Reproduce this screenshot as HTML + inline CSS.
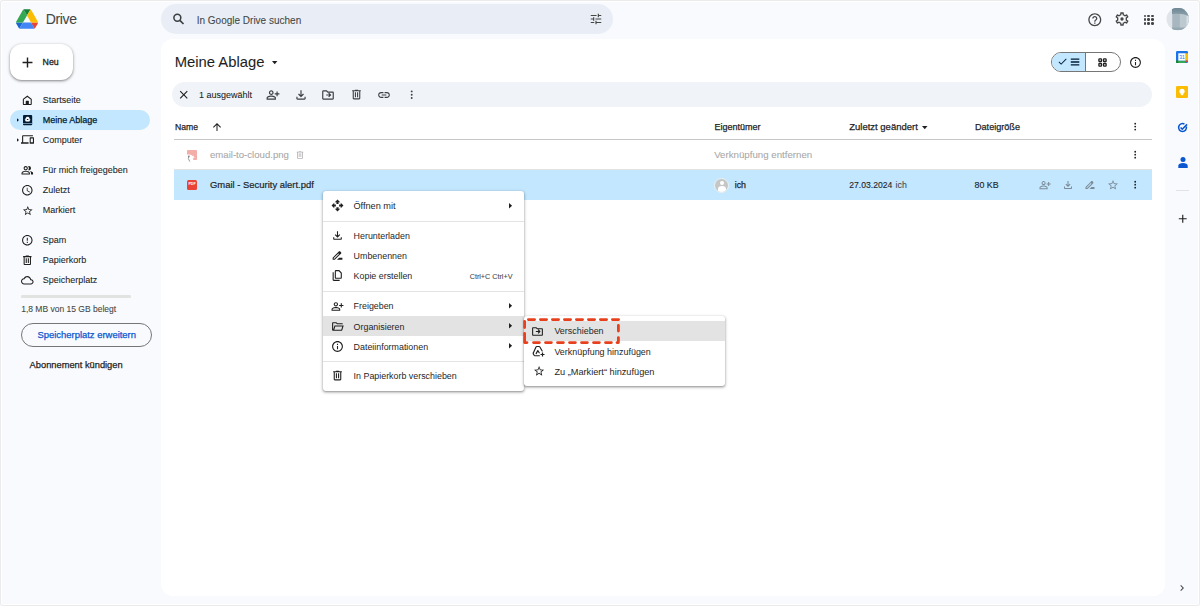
<!DOCTYPE html>
<html><head><meta charset="utf-8">
<style>
*{box-sizing:border-box;margin:0;padding:0}
html,body{width:1200px;height:606px;overflow:hidden}
body{background:#f8fafd;font-family:"Liberation Sans",sans-serif;color:#1f1f1f;position:relative}
.a{position:absolute}
.t{position:absolute;white-space:nowrap;line-height:1}
svg{position:absolute;overflow:visible}
</style></head><body>
<div class="a" style="left:0;top:0;width:1200px;height:606px;border:1px solid #ebebeb;border-radius:3px"></div>
<div class="a" style="left:1px;top:1px;width:1198px;height:604px;border:1px solid #fff;border-radius:2px"></div>
<svg style="left:16px;top:9px" width="22" height="20" viewBox="0 0 87.3 78">
<path d="m6.6 66.85 3.85 6.65c.8 1.4 1.95 2.5 3.3 3.3l13.75-23.8h-27.5c0 1.55.4 3.1 1.2 4.5z" fill="#1967d2"/>
<path d="m43.65 25-13.75-23.8c-1.35.8-2.5 1.9-3.3 3.3l-25.4 44a9.06 9.06 0 0 0 -1.2 4.5h27.5z" fill="#34a853"/>
<path d="m73.55 76.8c1.35-.8 2.5-1.9 3.3-3.3l1.6-2.75 7.65-13.25c.8-1.4 1.2-2.95 1.2-4.5h-27.502l5.852 11.5z" fill="#ea4335"/>
<path d="m43.65 25 13.75-23.8c-1.35-.8-2.9-1.2-4.5-1.2h-18.5c-1.6 0-3.15.45-4.5 1.2z" fill="#188038"/>
<path d="m59.8 53h-32.3l-13.75 23.8c1.35.8 2.9 1.2 4.5 1.2h50.8c1.6 0 3.15-.45 4.5-1.2z" fill="#4285f4"/>
<path d="m73.4 26.5-12.7-22c-.8-1.4-1.95-2.5-3.3-3.3l-13.75 23.8 16.15 28h27.45c0-1.55-.4-3.1-1.2-4.5z" fill="#fbbc04"/>
</svg>
<div class="t" style="left:45.7px;top:12.45px;font-size:14px;color:#444746;font-weight:normal;-webkit-text-stroke:0.08px #444746;letter-spacing:-0.32px">Drive</div>
<div class="a" style="left:161px;top:4px;width:452px;height:30px;border-radius:15px;background:#e9eef6"></div>
<svg style="left:0;top:0" width="1200" height="606" viewBox="0 0 1200 606"><circle cx="177.35" cy="17.8" r="3.45" fill="none" stroke="#3c3f41" stroke-width="1.55"/><path d="M179.9 20.4L183.5 24" stroke="#3c3f41" stroke-width="1.65"/></svg>
<div class="t" style="left:196.7px;top:15.54px;font-size:10px;color:#444746;font-weight:normal;-webkit-text-stroke:0.08px #444746;">In Google Drive suchen</div>
<svg style="left:588.5px;top:12px;" width="14" height="14" viewBox="0 0 24 24"><path fill="#444746" d="M3 17v2h6v-2H3zM3 5v2h10V5H3zm10 16v-2h8v-2h-8v-2h-2v6h2zM7 9v2H3v2h4v2h2V9H7zm14 4v-2H11v2h10zm-6-4h2V7h4V5h-4V3h-2v6z"/></svg>
<svg style="left:1086.8px;top:11.5px;" width="15.6" height="15.6" viewBox="0 0 24 24"><path fill="#444746" d="M11 18h2v-2h-2v2zm1-16C6.48 2 2 6.48 2 12s4.48 10 10 10 10-4.48 10-10S17.52 2 12 2zm0 18c-4.41 0-8-3.59-8-8s3.590-8 8-8 8 3.59 8 8-3.59 8-8 8zm0-14c-2.21 0-4 1.79-4 4h2c0-1.1.9-2 2-2s2 .9 2 2c0 2-3 1.75-3 5h2c0-2.25 3-2.5 3-5 0-2.21-1.79-4-4-4z"/></svg>
<svg style="left:1114px;top:11.2px;" width="16" height="16" viewBox="0 0 24 24"><path fill="#444746" d="M19.43 12.98c.04-.32.07-.64.07-.98 0-.34-.03-.66-.07-.98l2.11-1.65c.19-.15.24-.42.12-.64l-2-3.46c-.09-.16-.26-.25-.44-.25-.06 0-.12.01-.17.03l-2.49 1c-.52-.4-1.08-.73-1.69-.98l-.38-2.65C14.46 2.18 14.25 2 14 2h-4c-.25 0-.46.18-.49.42l-.38 2.65c-.61.25-1.17.59-1.69.98l-2.49-1c-.06-.02-.12-.03-.18-.03-.17 0-.34.09-.43.25l-2 3.46c-.13.22-.07.49.12.64l2.11 1.65c-.04.32-.07.65-.07.98 0 .33.03.66.07.98l-2.11 1.65c-.19.15-.24.42-.12.64l2 3.46c.09.16.26.25.44.25.06 0 .12-.01.17-.03l2.49-1c.52.4 1.08.73 1.690.98l.38 2.65c.03.24.24.42.49.42h4c.25 0 .46-.18.49-.42l.38-2.65c.61-.25 1.17-.59 1.69-.98l2.49 1c.06.02.12.03.18.03.17 0 .34-.09.43-.25l2-3.46c.12-.22.07-.49-.12-.64l-2.11-1.65zm-1.98-1.71c.04.31.05.52.05.73 0 .21-.02.43-.05.73l-.14 1.13.89.7 1.08.84-.7 1.21-1.27-.51-1.04-.42-.9.68c-.43.32-.84.56-1.25.73l-1.06.43-.16 1.13-.2 1.35h-1.4l-.19-1.35-.16-1.13-1.06-.43c-.43-.18-.83-.41-1.23-.71l-.91-.7-1.06.43-1.27.51-.7-1.21 1.08-.84.89-.7-.14-1.13c-.03-.31-.05-.54-.05-.74s.02-.43.05-.73l.14-1.13-.89-.7-1.08-.84.7-1.21 1.27.51 1.04.42.9-.68c.43-.32.84-.56 1.25-.73l1.06-.43.16-1.13.2-1.35h1.39l.19 1.35.16 1.13 1.06.43c.43.18.83.41 1.23.71l.91.7 1.06-.43 1.27-.51.7 1.21-1.07.85-.89.7.14 1.13zM12 9.5a2.5 2.5 0 1 0 0 5 2.5 2.5 0 1 0 0-5z"/></svg>
<div class="a" style="left:1143.6px;top:14.6px;width:2.4px;height:2.4px;border-radius:50%;background:#444746"></div>
<div class="a" style="left:1147.4px;top:14.6px;width:2.4px;height:2.4px;border-radius:50%;background:#444746"></div>
<div class="a" style="left:1151.2px;top:14.6px;width:2.4px;height:2.4px;border-radius:50%;background:#444746"></div>
<div class="a" style="left:1143.6px;top:18.4px;width:2.4px;height:2.4px;border-radius:50%;background:#444746"></div>
<div class="a" style="left:1147.4px;top:18.4px;width:2.4px;height:2.4px;border-radius:50%;background:#444746"></div>
<div class="a" style="left:1151.2px;top:18.4px;width:2.4px;height:2.4px;border-radius:50%;background:#444746"></div>
<div class="a" style="left:1143.6px;top:22.2px;width:2.4px;height:2.4px;border-radius:50%;background:#444746"></div>
<div class="a" style="left:1147.4px;top:22.2px;width:2.4px;height:2.4px;border-radius:50%;background:#444746"></div>
<div class="a" style="left:1151.2px;top:22.2px;width:2.4px;height:2.4px;border-radius:50%;background:#444746"></div>
<svg style="left:1166px;top:8px" width="23" height="22" viewBox="0 0 23 22"><defs><clipPath id="av"><circle cx="11.7" cy="11.05" r="11.2"/></clipPath><linearGradient id="avg" x1="0" y1="0" x2="0" y2="1"><stop offset="0" stop-color="#6f8794"/><stop offset="1" stop-color="#8ea2ad"/></linearGradient></defs><g clip-path="url(#av)"><rect x="0" y="0" width="23" height="22" fill="#dfe5e8"/><rect x="6.2" y="0" width="17" height="22" fill="#a8b7bf"/><rect x="13.8" y="0" width="9" height="22" fill="#bccad0"/><path d="M6 0H23V8Q16 5 6 6z" fill="url(#avg)"/><rect x="20.5" y="8" width="3" height="14" fill="#d9e0e4"/><rect x="6.2" y="19.5" width="14" height="3" fill="#95a8b2"/></g></svg>
<div class="a" style="left:161px;top:39px;width:1004px;height:557px;border-radius:12px;background:#fff"></div>
<div class="a" style="left:10px;top:44px;width:63px;height:36px;border-radius:12px;background:#fff;box-shadow:0 1px 2px rgba(0,0,0,.3),0 1px 3px 1px rgba(0,0,0,.15)"></div>
<svg style="left:18.8px;top:53.8px;" width="17" height="17" viewBox="0 0 24 24"><path fill="#1f1f1f" d="M19 13h-6v6h-2v-6H5v-2h6V5h2v6h6v2z"/></svg>
<div class="t" style="left:42.6px;top:58.35px;font-size:8.8px;color:#1f1f1f;font-weight:normal;-webkit-text-stroke:0.31px #1f1f1f">Neu</div>
<div class="a" style="left:10px;top:110px;width:140px;height:20px;border-radius:10px;background:#c2e7ff"></div>
<svg style="left:21.3px;top:93.9px;" width="12.6" height="12.6" viewBox="0 0 24 24"><path fill="#1f1f1f" d="M12 3 3.5 9.5V19c0 1.1.9 2 2 2h13c1.1 0 2-.9 2-2V9.5L12 3zm6.5 16H15v-5c0-.55-.45-1-1-1h-4c-.55 0-1 .45-1 1v5H5.5v-8.5L12 5.5l6.5 5V19z"/></svg>
<div class="t" style="left:42.7px;top:95.98px;font-size:9px;color:#1f1f1f;font-weight:normal;-webkit-text-stroke:0.08px #1f1f1f;">Startseite</div>
<svg style="left:22.9px;top:114.5px" width="9.2" height="10.3" viewBox="0 0 9.2 10.3"><rect x="0" y="0" width="9.2" height="10.3" rx="1" fill="#001d35"/><rect x="0" y="8" width="9.2" height="0.9" fill="#7d9bb3"/><path d="M3.6 2.1H5.6L7 4.7 6.4 6.2H2.8L2.2 4.7z" fill="#fff" stroke="#fff" stroke-width=".5" stroke-linejoin="round"/><path d="M4.1 4.1H5.1L5.6 5.1H3.6z" fill="#001d35"/></svg>
<svg style="left:15.5px;top:117.6px" width="4" height="4" viewBox="0 0 24 24"><path fill="#001d35" d="M6 2l12 10-12 10z"/></svg>
<div class="t" style="left:42.7px;top:115.88px;font-size:9px;color:#001d35;font-weight:normal;-webkit-text-stroke:0.25px #001d35">Meine Ablage</div>
<svg style="left:15.5px;top:137.5px" width="4" height="4" viewBox="0 0 24 24"><path fill="#1f1f1f" d="M6 2l12 10-12 10z"/></svg>
<svg style="left:21.2px;top:132.5px;" width="13" height="13" viewBox="0 0 24 24"><path fill="#1f1f1f" d="M4 6h18V4H4c-1.1 0-2 .9-2 2v11H0v3h14v-3H4V6zm19 2h-6c-.55 0-1 .45-1 1v10c0 .55.45 1 1 1h6c.55 0 1-.45 1-1V9c0-.55-.45-1-1-1zm-1 9h-4v-7h4v7z"/></svg>
<div class="t" style="left:42.7px;top:135.78px;font-size:9px;color:#1f1f1f;font-weight:normal;-webkit-text-stroke:0.08px #1f1f1f;">Computer</div>
<svg style="left:21.3px;top:163.9px;" width="12.6" height="12.6" viewBox="0 0 24 24"><path fill="#1f1f1f" d="M16.67 13.13C18.04 14.06 19 15.32 19 17v3h4v-3c0-2.18-3.57-3.47-6.33-3.87zM15 12c2.21 0 4-1.79 4-4s-1.79-4-4-4c-.47 0-.91.1-1.33.24C14.5 5.27 15 6.58 15 8s-.5 2.73-1.33 3.76c.42.14.86.24 1.33.24zm-6 0c2.21 0 4-1.79 4-4s-1.79-4-4-4-4 1.79-4 4 1.79 4 4 4zm0-6c1.1 0 2 .9 2 2s-.9 2-2 2-2-.9-2-2 .9-2 2-2zm0 7c-2.67 0-8 1.34-8 4v3h16v-3c0-2.66-5.33-4-8-4zm6 5H3v-.99C3.2 16.29 6.3 15 9 15s5.8 1.29 6 2v1z"/></svg>
<div class="t" style="left:42.7px;top:165.98px;font-size:9px;color:#1f1f1f;font-weight:normal;-webkit-text-stroke:0.08px #1f1f1f;">Für mich freigegeben</div>
<svg style="left:21.3px;top:183.9px;" width="12.6" height="12.6" viewBox="0 0 24 24"><path fill="#1f1f1f" d="M11.99 2C6.47 2 2 6.48 2 12s4.47 10 9.99 10C17.52 22 22 17.52 22 12S17.52 2 11.99 2zM12 20c-4.42 0-8-3.58-8-8s3.58-8 8-8 8 3.58 8 8-3.58 8-8 8zm.5-13H11v6l5.25 3.15.75-1.23-4.5-2.67z"/></svg>
<div class="t" style="left:42.7px;top:185.98px;font-size:9px;color:#1f1f1f;font-weight:normal;-webkit-text-stroke:0.08px #1f1f1f;">Zuletzt</div>
<svg style="left:21.9px;top:204.70000000000002px;" width="11.6" height="11.6" viewBox="0 0 24 24"><path fill="#1f1f1f" d="M22 9.24l-7.19-.62L12 2 9.19 8.63 2 9.24l5.46 4.73L5.82 21 12 17.27 18.18 21l-1.63-7.03L22 9.24zM12 15.4l-3.76 2.27 1-4.28-3.32-2.88 4.38-.38L12 6.1l1.71 4.04 4.38.38-3.32 2.88 1 4.28L12 15.4z"/></svg>
<div class="t" style="left:42.7px;top:206.08px;font-size:9px;color:#1f1f1f;font-weight:normal;-webkit-text-stroke:0.08px #1f1f1f;">Markiert</div>
<svg style="left:21.3px;top:234.2px;" width="12.6" height="12.6" viewBox="0 0 24 24"><path fill="#1f1f1f" d="M11 15h2v2h-2zm0-8h2v6h-2zm.99-5C6.47 2 2 6.48 2 12s4.47 10 9.99 10C17.52 22 22 17.52 22 12S17.52 2 11.99 2zM12 20c-4.42 0-8-3.58-8-8s3.58-8 8-8 8 3.58 8 8-3.58 8-8 8z"/></svg>
<div class="t" style="left:42.7px;top:236.28px;font-size:9px;color:#1f1f1f;font-weight:normal;-webkit-text-stroke:0.08px #1f1f1f;">Spam</div>
<svg style="left:21.3px;top:254.2px;" width="12.6" height="12.6" viewBox="0 0 24 24"><path fill="#1f1f1f" d="M7 21c-.55 0-1.02-.2-1.41-.59C5.2 20.02 5 19.55 5 19V6H4V4h5V3h6v1h5v2h-1v13c0 .55-.2 1.02-.59 1.41-.39.39-.86.59-1.41.59H7zM17 6H7v13h10V6zM9 17h2V8H9v9zm4 0h2V8h-2v9z"/></svg>
<div class="t" style="left:42.7px;top:256.28px;font-size:9px;color:#1f1f1f;font-weight:normal;-webkit-text-stroke:0.08px #1f1f1f;">Papierkorb</div>
<svg style="left:21.3px;top:274.2px;" width="12.6" height="12.6" viewBox="0 0 24 24"><path fill="#1f1f1f" d="M19.35 10.04C18.67 6.59 15.64 4 12 4 9.11 4 6.6 5.64 5.35 8.04 2.34 8.36 0 10.91 0 14c0 3.31 2.69 6 6 6h13c2.76 0 5-2.24 5-5 0-2.64-2.05-4.78-4.65-4.96zM19 18H6c-2.21 0-4-1.79-4-4 0-2.05 1.53-3.76 3.56-3.97l1.07-.11.5-.95C8.08 7.14 9.94 6 12 6c2.62 0 4.88 1.86 5.39 4.43l.3 1.5 1.53.11c1.56.1 2.78 1.41 2.78 2.96 0 1.65-1.35 3-3 3z"/></svg>
<div class="t" style="left:42.7px;top:276.28px;font-size:9px;color:#1f1f1f;font-weight:normal;-webkit-text-stroke:0.08px #1f1f1f;">Speicherplatz</div>
<div class="a" style="left:21px;top:295.3px;width:110px;height:2.5px;border-radius:1.25px;background:#e1e3e1"></div>
<div class="t" style="left:21.2px;top:305.40px;font-size:8.5px;color:#444746;font-weight:normal;-webkit-text-stroke:0.08px #444746;">1,8 MB von 15 GB belegt</div>
<div class="a" style="left:21px;top:323px;width:131px;height:24px;border-radius:12px;border:1px solid #747775"></div>
<div class="t" style="left:37.4px;top:330.00px;font-size:9.45px;color:#0b57d0;font-weight:normal;-webkit-text-stroke:0.25px #0b57d0">Speicherplatz erweitern</div>
<div class="t" style="left:29.6px;top:360.73px;font-size:9.3px;color:#1f1f1f;font-weight:normal;-webkit-text-stroke:0.25px #1f1f1f">Abonnement kündigen</div>
<div class="t" style="left:174.75px;top:55.37px;font-size:14.8px;color:#1f1f1f;font-weight:normal;-webkit-text-stroke:0.08px #1f1f1f;">Meine Ablage</div>
<svg style="left:272.3px;top:60.7px" width="5.4" height="3.3" viewBox="0 0 5.4 3.3"><path fill="#1f1f1f" d="M0 0H5.4L2.7 3.3z"/></svg>
<div class="a" style="left:1051px;top:52px;width:70px;height:20px;border-radius:10px;border:1px solid #747775;overflow:hidden"><div class="a" style="left:0;top:0;width:34px;height:18px;background:#c2e7ff;border-right:1px solid #747775"></div></div>
<svg style="left:1057px;top:55.5px;" width="11" height="11" viewBox="0 0 24 24"><path fill="#001d35" d="M9 16.17L4.83 12l-1.42 1.41L9 19 21 7l-1.41-1.41z"/></svg>
<svg style="left:0;top:0" width="1200" height="606" viewBox="0 0 1200 606"><path d="M1070.8 59.1H1079.3M1070.8 62H1079.3M1070.8 64.9H1079.3" stroke="#001d35" stroke-width="1.4"/></svg>
<svg style="left:1098px;top:58px" width="9" height="9" viewBox="0 0 9 9"><g fill="none" stroke="#1f1f1f" stroke-width="1.3"><rect x="0.9" y="0.9" width="2.6" height="2.6" rx=".6"/><rect x="5.5" y="0.9" width="2.6" height="2.6" rx=".6"/><rect x="0.9" y="5.5" width="2.6" height="2.6" rx=".6"/><rect x="5.5" y="5.5" width="2.6" height="2.6" rx=".6"/></g></svg>
<svg style="left:1129.2px;top:55.5px;" width="13" height="13" viewBox="0 0 24 24"><path fill="#1f1f1f" d="M11 7h2v2h-2zm0 4h2v6h-2zm1-9C6.48 2 2 6.48 2 12s4.48 10 10 10 10-4.48 10-10S17.52 2 12 2zm0 18c-4.41 0-8-3.59-8-8s3.59-8 8-8 8 3.59 8 8-3.59 8-8 8z"/></svg>
<div class="a" style="left:171.5px;top:82px;width:980.3px;height:25px;border-radius:12.5px;background:#f0f4f9"></div>
<svg style="left:177.2px;top:88.2px;" width="13.5" height="13.5" viewBox="0 0 24 24"><path fill="#1f1f1f" d="M19 6.41L17.59 5 12 10.59 6.41 5 5 6.41 10.59 12 5 17.59 6.41 19 12 13.41 17.59 19 19 17.59 13.41 12z"/></svg>
<div class="t" style="left:199px;top:90.88px;font-size:9px;color:#1f1f1f;font-weight:normal;-webkit-text-stroke:0.08px #1f1f1f;">1 ausgewählt</div>
<svg style="left:266.3px;top:87.7px;" width="14" height="14" viewBox="0 0 24 24"><path fill="#3c3f41" d="M18 14v-3h-3V9h3V6h2v3h3v2h-3v3h-2zM9 12c-1.1 0-2.04-.39-2.83-1.17C5.39 10.04 5 9.1 5 8s.39-2.04 1.17-2.83C6.96 4.39 7.9 4 9 4s2.04.39 2.83 1.17C12.61 5.96 13 6.9 13 8s-.39 2.04-1.17 2.83C11.04 11.61 10.1 12 9 12zM1 20v-2.8c0-.57.15-1.09.44-1.56.29-.48.68-.84 1.16-1.09 1.03-.52 2.08-.9 3.15-1.16C6.82 13.13 7.9 13 9 13s2.18.13 3.25.39c1.07.26 2.12.65 3.15 1.16.48.25.87.61 1.16 1.09.29.47.44.99.44 1.56V20H1zm2-2h12v-.8c0-.18-.05-.35-.14-.5-.09-.15-.21-.27-.36-.35-.9-.45-1.81-.79-2.73-1.01C10.85 15.11 9.93 15 9 15s-1.85.11-2.77.34c-.92.22-1.83.56-2.73 1.01-.15.08-.27.2-.36.35-.09.15-.14.32-.14.5v.8zm6-8c.55 0 1.02-.2 1.41-.59C10.8 9.02 11 8.55 11 8s-.2-1.02-.59-1.41C10.02 6.2 9.55 6 9 6s-1.02.2-1.41.59C7.2 6.98 7 7.45 7 8s.2 1.02.59 1.41C7.98 9.8 8.45 10 9 10z"/></svg>
<svg style="left:294.3px;top:87.7px;" width="14" height="14" viewBox="0 0 24 24"><path fill="#3c3f41" d="M12 16l-5-5 1.4-1.45 2.6 2.6V4h2v8.15l2.6-2.6L17 11l-5 5zm-6 4c-.55 0-1.02-.2-1.41-.59C4.2 19.02 4 18.55 4 18v-3h2v3h12v-3h2v3c0 .55-.2 1.02-.59 1.41-.39.39-.86.59-1.41.59H6z"/></svg>
<svg style="left:321.3px;top:87.7px;" width="14" height="14" viewBox="0 0 24 24"><path fill="#3c3f41" d="M14 13H9v-2h5l-1.6-1.6L13.8 8l4 4-4 4-1.4-1.4L14 13zM4 20c-.55 0-1.02-.2-1.41-.59C2.2 19.02 2 18.55 2 18V6c0-.55.2-1.02.59-1.41C2.98 4.2 3.45 4 4 4h6l2 2h8c.55 0 1.02.2 1.41.59.39.39.59.86.59 1.41v10c0 .55-.2 1.02-.59 1.41-.39.39-.86.59-1.41.59H4zm0-2h16V8h-8.83l-2-2H4v12z"/></svg>
<svg style="left:349.8px;top:88.3px;" width="13" height="13" viewBox="0 0 24 24"><path fill="#3c3f41" d="M7 21c-.55 0-1.02-.2-1.41-.59C5.2 20.02 5 19.55 5 19V6H4V4h5V3h6v1h5v2h-1v13c0 .55-.2 1.02-.59 1.41-.39.39-.86.59-1.41.59H7zM17 6H7v13h10V6zM9 17h2V8H9v9zm4 0h2V8h-2v9z"/></svg>
<svg style="left:376.8px;top:87.7px;" width="14" height="14" viewBox="0 0 24 24"><path fill="#3c3f41" d="M3.9 12c0-1.71 1.39-3.1 3.1-3.1h4V7H7c-2.76 0-5 2.24-5 5s2.24 5 5 5h4v-1.9H7c-1.71 0-3.1-1.39-3.1-3.1zM8 13h8v-2H8v2zm9-6h-4v1.9h4c1.71 0 3.1 1.39 3.1 3.1s-1.39 3.1-3.1 3.1h-4V17h4c2.76 0 5-2.24 5-5s-2.24-5-5-5z"/></svg>
<svg style="left:0;top:0" width="1200" height="606" viewBox="0 0 1200 606"><g fill="#3c3f41"><circle cx="411.7" cy="91.40" r="0.95"/><circle cx="411.7" cy="94.7" r="0.95"/><circle cx="411.7" cy="98.00" r="0.95"/></g></svg>
<div class="t" style="left:175px;top:123.28px;font-size:8.65px;color:#1f1f1f;font-weight:normal;-webkit-text-stroke:0.25px #1f1f1f">Name</div>
<svg style="left:211px;top:120.5px;" width="12" height="12" viewBox="0 0 24 24"><path fill="#1f1f1f" d="M4 12l1.41 1.41L11 7.83V20h2V7.83l5.58 5.59L20 12l-8-8-8 8z"/></svg>
<div class="t" style="left:714.6px;top:123.38px;font-size:9px;color:#1f1f1f;font-weight:normal;-webkit-text-stroke:0.25px #1f1f1f">Eigentümer</div>
<div class="t" style="left:849.2px;top:122.36px;font-size:9.5px;color:#1f1f1f;font-weight:normal;-webkit-text-stroke:0.25px #1f1f1f">Zuletzt geändert</div>
<svg style="left:921.7px;top:125.8px" width="5.5" height="3.2" viewBox="0 0 5.5 3.2"><path fill="#1f1f1f" d="M0 0H5.5L2.75 3.2z"/></svg>
<div class="t" style="left:975px;top:123.30px;font-size:9.1px;color:#1f1f1f;font-weight:normal;-webkit-text-stroke:0.25px #1f1f1f">Dateigröße</div>
<svg style="left:0;top:0" width="1200" height="606" viewBox="0 0 1200 606"><g fill="#1f1f1f"><circle cx="1135.2" cy="123.65" r="0.9"/><circle cx="1135.2" cy="126.6" r="0.9"/><circle cx="1135.2" cy="129.55" r="0.9"/></g></svg>
<div class="a" style="left:174px;top:139px;width:978px;height:1px;background:#c7c7c7"></div>
<svg style="left:182px;top:145px" width="20" height="20" viewBox="0 0 20 20"><rect x="5" y="5" width="10" height="10" rx="0.8" fill="#f4aeaa"/><path d="M4.8 15.2V9.4H7.6L9.3 9.9 10.4 10.9 11.2 10.6 12.3 12.5 13.5 12.8H11.2V15.2z" fill="#fff"/><path d="M6.6 11.2Q5.4 13.3 7.6 16.3" stroke="#9a9a9a" stroke-width="1" fill="none" stroke-linecap="round"/><path d="M5.6 10.9 7.6 10.4 7.4 12.4z" fill="#777"/></svg>
<div class="t" style="left:210px;top:150.27px;font-size:9.6px;color:#a8a8a8;font-weight:normal;-webkit-text-stroke:0.08px #a8a8a8;">email-to-cloud.png</div>
<svg style="left:295px;top:149.9px;" width="10" height="10" viewBox="0 0 24 24"><path fill="#b5b5b5" d="M7 21c-.55 0-1.02-.2-1.41-.59C5.2 20.02 5 19.55 5 19V6H4V4h5V3h6v1h5v2h-1v13c0 .55-.2 1.02-.59 1.41-.39.39-.86.59-1.41.59H7zM17 6H7v13h10V6zM9 17h2V8H9v9zm4 0h2V8h-2v9z"/></svg>
<div class="t" style="left:714.2px;top:150.09px;font-size:9.7px;color:#a8a8a8;font-weight:normal;-webkit-text-stroke:0.08px #a8a8a8;">Verknüpfung entfernen</div>
<svg style="left:0;top:0" width="1200" height="606" viewBox="0 0 1200 606"><g fill="#1f1f1f"><circle cx="1135.2" cy="151.75" r="0.9"/><circle cx="1135.2" cy="154.7" r="0.9"/><circle cx="1135.2" cy="157.65" r="0.9"/></g></svg>
<div class="a" style="left:174px;top:169px;width:978px;height:1px;background:#e3e3e3"></div>
<div class="a" style="left:174px;top:170px;width:978px;height:30px;background:#c2e7ff"></div>
<div class="a" style="left:187px;top:180.4px;width:10px;height:10px;border-radius:1.5px;background:#ea4335"></div>
<div class="t" style="left:187px;top:183.2px;width:10px;text-align:center;font-size:3.6px;color:#fff;font-weight:bold">PDF</div>
<div class="t" style="left:210px;top:180.20px;font-size:9.45px;color:#1f1f1f;font-weight:normal;-webkit-text-stroke:0.20px #1f1f1f">Gmail - Security alert.pdf</div>
<div class="a" style="left:714px;top:177.5px;width:15px;height:15px;border-radius:50%;background:#c4c7c5;border:1px solid #eef3f6;overflow:hidden"><div class="a" style="left:4.5px;top:2.5px;width:4px;height:4px;border-radius:50%;background:#fff"></div><div class="a" style="left:2.5px;top:7.8px;width:8px;height:6px;border-radius:50% 50% 0 0;background:#fff"></div></div>
<div class="t" style="left:734.7px;top:181.05px;font-size:8.8px;color:#1f1f1f;font-weight:normal;-webkit-text-stroke:0.25px #1f1f1f">ich</div>
<div class="t" style="left:849.2px;top:181.18px;font-size:8.65px;color:#1f1f1f;font-weight:normal;-webkit-text-stroke:0.12px #1f1f1f">27.03.2024</div>
<div class="t" style="left:895.6px;top:181.05px;font-size:8.8px;color:#444746;font-weight:normal;-webkit-text-stroke:0.08px #444746;">ich</div>
<div class="t" style="left:974.5px;top:180.97px;font-size:8.9px;color:#1f1f1f;font-weight:normal;-webkit-text-stroke:0.12px #1f1f1f">80 KB</div>
<svg style="left:1039px;top:179px;" width="12.2" height="12.2" viewBox="0 0 24 24"><path fill="#7c8a96" d="M18 14v-3h-3V9h3V6h2v3h3v2h-3v3h-2zM9 12c-1.1 0-2.04-.39-2.83-1.17C5.39 10.04 5 9.1 5 8s.39-2.04 1.17-2.83C6.96 4.39 7.9 4 9 4s2.04.39 2.83 1.17C12.61 5.96 13 6.9 13 8s-.39 2.04-1.17 2.83C11.04 11.61 10.1 12 9 12zM1 20v-2.8c0-.57.15-1.09.44-1.56.29-.48.68-.84 1.16-1.09 1.03-.52 2.08-.9 3.15-1.16C6.82 13.13 7.9 13 9 13s2.18.13 3.25.39c1.07.26 2.12.65 3.15 1.16.48.25.87.61 1.16 1.09.29.47.44.99.44 1.56V20H1zm2-2h12v-.8c0-.18-.05-.35-.14-.5-.09-.15-.21-.27-.36-.35-.9-.45-1.81-.79-2.73-1.01C10.85 15.11 9.93 15 9 15s-1.85.11-2.77.34c-.92.22-1.83.56-2.73 1.01-.15.08-.27.2-.36.35-.09.15-.14.32-.14.5v.8zm6-8c.55 0 1.02-.2 1.41-.59C10.8 9.02 11 8.55 11 8s-.2-1.02-.59-1.41C10.02 6.2 9.55 6 9 6s-1.02.2-1.41.59C7.2 6.98 7 7.45 7 8s.2 1.02.59 1.41C7.98 9.8 8.45 10 9 10z"/></svg>
<svg style="left:1061.8px;top:179.2px;" width="12" height="12" viewBox="0 0 24 24"><path fill="#7c8a96" d="M12 16l-5-5 1.4-1.45 2.6 2.6V4h2v8.15l2.6-2.6L17 11l-5 5zm-6 4c-.55 0-1.02-.2-1.41-.59C4.2 19.02 4 18.55 4 18v-3h2v3h12v-3h2v3c0 .55-.2 1.02-.59 1.41-.39.39-.86.59-1.41.59H6z"/></svg>
<svg style="left:1084.3px;top:179px;" width="12" height="12" viewBox="0 0 24 24"><path fill="#7c8a96" d="M18.41 5.8L17.2 4.59c-.78-.78-2.05-.78-2.83 0l-2.68 2.68L3 15.96V20h4.04l8.74-8.74 2.63-2.63c.79-.78.79-2.05 0-2.83zM6.21 18H5v-1.21l8.66-8.66 1.21 1.21L6.21 18zM11 20l4-4h6v4H11z"/></svg>
<svg style="left:1107px;top:179px;" width="12" height="12" viewBox="0 0 24 24"><path fill="#7c8a96" d="M22 9.24l-7.19-.62L12 2 9.19 8.63 2 9.24l5.46 4.73L5.82 21 12 17.27 18.18 21l-1.63-7.03L22 9.24zM12 15.4l-3.76 2.27 1-4.28-3.32-2.88 4.38-.38L12 6.1l1.71 4.04 4.38.38-3.32 2.88 1 4.28L12 15.4z"/></svg>
<svg style="left:0;top:0" width="1200" height="606" viewBox="0 0 1200 606"><g fill="#1f1f1f"><circle cx="1135.2" cy="181.75" r="0.9"/><circle cx="1135.2" cy="184.7" r="0.9"/><circle cx="1135.2" cy="187.65" r="0.9"/></g></svg>
<svg style="left:1176.3px;top:51px" width="12" height="12" viewBox="0 0 12 12"><rect x="0" y="0" width="12" height="12" rx="1.3" fill="#1a73e8"/><rect x="9.6" y="2.3" width="2.4" height="7.4" fill="#fbbc04"/><rect x="0" y="9.6" width="9.7" height="2.4" fill="#34a853"/><path d="M0 9.6H2.3V12H1.3Q0 12 0 10.7z" fill="#188038"/><path d="M9.6 9.6h2.4L9.6 12z" fill="#ea4335"/><rect x="2.3" y="2.3" width="7.3" height="7.3" fill="#fff"/><text x="5.95" y="8" font-size="5.2" text-anchor="middle" fill="#1a73e8" font-family="Liberation Sans" letter-spacing="-0.3">31</text></svg>
<svg style="left:1176.3px;top:86.2px" width="12" height="12" viewBox="0 0 12 12"><rect x="0" y="0" width="12" height="12" rx="1.3" fill="#fbbc04"/><circle cx="6" cy="5.3" r="2.6" fill="#fff"/><rect x="4.8" y="7.4" width="2.4" height="1.8" fill="#fff"/></svg>
<svg style="left:1177px;top:121.5px" width="11.5" height="11.5" viewBox="0 0 24 24"><path fill="none" stroke="#0b57d0" stroke-width="3.3" d="M19.5 9.5A8.2 8.2 0 1 1 15.5 4.3"/><path fill="none" stroke="#0b57d0" stroke-width="3.3" d="M7.5 11.5l3.5 3.5 10-10"/></svg>
<svg style="left:1177.5px;top:156.5px" width="10" height="11" viewBox="0 0 10 11"><circle cx="5" cy="2.5" r="2.5" fill="#0b57d0"/><path d="M0.3 11v-2.2C0.3 6.8 2.5 6 5 6s4.7.8 4.7 2.8V11z" fill="#0b57d0"/></svg>
<div class="a" style="left:1176px;top:189.5px;width:13px;height:1px;background:#e3e3e3"></div>
<svg style="left:1175.5px;top:211.8px;" width="13.5" height="13.5" viewBox="0 0 24 24"><path fill="#1f1f1f" d="M19 13h-6v6h-2v-6H5v-2h6V5h2v6h6v2z"/></svg>
<svg style="left:1175.5px;top:582px;" width="12" height="12" viewBox="0 0 24 24"><path fill="#444746" d="M8.59 16.59L13.17 12 8.59 7.41 10 6l6 6-6 6-1.41-1.41z"/></svg>
<div class="a" style="left:323px;top:191px;width:200.5px;height:200px;border-radius:3px;background:#fff;box-shadow:0 1px 2px rgba(0,0,0,.3),0 1px 3px 1px rgba(0,0,0,.15)"></div>
<div class="a" style="left:323px;top:316.3px;width:200.5px;height:19.7px;background:#e3e3e3"></div>
<div class="a" style="left:323px;top:220.5px;width:200.5px;height:1px;background:#e3e3e3"></div>
<div class="a" style="left:323px;top:290.9px;width:200.5px;height:1px;background:#e3e3e3"></div>
<div class="a" style="left:323px;top:361.0px;width:200.5px;height:1px;background:#e3e3e3"></div>
<svg style="left:331px;top:199.2px;" width="13" height="13" viewBox="0 0 24 24"><path fill="#1f1f1f" d="M10 9h4V6h3l-5-5-5 5h3v3zm-1 1H6V7l-5 5 5 5v-3h3v-4zm14 2l-5-5v3h-3v4h3v3l5-5zm-9 3h-4v3H7l5 5 5-5h-3v-3z"/></svg>
<div class="t" style="left:353.4px;top:201.91px;font-size:9.2px;color:#1f1f1f;font-weight:normal;-webkit-text-stroke:0.00px #1f1f1f">Öffnen mit</div>
<svg style="left:508.9px;top:202.89999999999998px" width="3.1" height="5.5" viewBox="0 0 3.1 5.5"><path fill="#1f1f1f" d="M0 0L3.1 2.75L0 5.5z"/></svg>
<svg style="left:331px;top:229.1px;" width="13" height="13" viewBox="0 0 24 24"><path fill="#1f1f1f" d="M12 16l-5-5 1.4-1.45 2.6 2.6V4h2v8.15l2.6-2.6L17 11l-5 5zm-6 4c-.55 0-1.02-.2-1.41-.59C4.2 19.02 4 18.55 4 18v-3h2v3h12v-3h2v3c0 .55-.2 1.02-.59 1.41-.39.39-.86.59-1.41.59H6z"/></svg>
<div class="t" style="left:353.6px;top:232.07px;font-size:8.9px;color:#1f1f1f;font-weight:normal;-webkit-text-stroke:0.00px #1f1f1f">Herunterladen</div>
<svg style="left:331px;top:249.2px;" width="13" height="13" viewBox="0 0 24 24"><path fill="#1f1f1f" d="M18.41 5.8L17.2 4.59c-.78-.78-2.05-.78-2.83 0l-2.68 2.68L3 15.96V20h4.04l8.74-8.74 2.63-2.63c.79-.78.79-2.05 0-2.83zM6.21 18H5v-1.21l8.66-8.66 1.21 1.21L6.21 18zM11 20l4-4h6v4H11z"/></svg>
<div class="t" style="left:353.6px;top:252.17px;font-size:8.9px;color:#1f1f1f;font-weight:normal;-webkit-text-stroke:0.00px #1f1f1f">Umbenennen</div>
<svg style="left:331px;top:269.4px;" width="13" height="13" viewBox="0 0 24 24"><path fill="#1f1f1f" d="M9 18c-.55 0-1.02-.2-1.41-.59C7.2 17.02 7 16.55 7 16V4c0-.55.2-1.02.59-1.41C7.98 2.2 8.45 2 9 2h6.17l4.83 4.83V16c0 .55-.2 1.02-.59 1.41-.39.39-.86.59-1.41.59H9zm0-2h9V7.67L14.33 4H9v12zm-4 6c-.55 0-1.02-.2-1.41-.59C3.2 21.02 3 20.55 3 20V6h2v14h11v2H5z"/></svg>
<div class="t" style="left:353.6px;top:272.37px;font-size:8.9px;color:#1f1f1f;font-weight:normal;-webkit-text-stroke:0.00px #1f1f1f">Kopie erstellen</div>
<svg style="left:331px;top:299.5px;" width="13" height="13" viewBox="0 0 24 24"><path fill="#1f1f1f" d="M18 14v-3h-3V9h3V6h2v3h3v2h-3v3h-2zM9 12c-1.1 0-2.04-.39-2.83-1.17C5.39 10.04 5 9.1 5 8s.39-2.04 1.17-2.83C6.96 4.39 7.9 4 9 4s2.04.39 2.83 1.17C12.61 5.96 13 6.9 13 8s-.39 2.04-1.17 2.83C11.04 11.61 10.1 12 9 12zM1 20v-2.8c0-.57.15-1.09.44-1.56.29-.48.68-.84 1.16-1.09 1.03-.52 2.08-.9 3.15-1.16C6.82 13.13 7.9 13 9 13s2.18.13 3.25.39c1.07.26 2.12.65 3.15 1.16.48.25.87.61 1.16 1.09.29.47.44.99.44 1.56V20H1zm2-2h12v-.8c0-.18-.05-.35-.14-.5-.09-.15-.21-.27-.36-.35-.9-.45-1.81-.79-2.73-1.01C10.85 15.11 9.93 15 9 15s-1.85.11-2.77.34c-.92.22-1.83.56-2.73 1.01-.15.08-.27.2-.36.35-.09.15-.14.32-.14.5v.8zm6-8c.55 0 1.02-.2 1.41-.59C10.8 9.02 11 8.55 11 8s-.2-1.02-.59-1.41C10.02 6.2 9.55 6 9 6s-1.02.2-1.41.59C7.2 6.98 7 7.45 7 8s.2 1.02.59 1.41C7.98 9.8 8.45 10 9 10z"/></svg>
<div class="t" style="left:353.6px;top:302.47px;font-size:8.9px;color:#1f1f1f;font-weight:normal;-webkit-text-stroke:0.00px #1f1f1f">Freigeben</div>
<svg style="left:508.9px;top:303.2px" width="3.1" height="5.5" viewBox="0 0 3.1 5.5"><path fill="#1f1f1f" d="M0 0L3.1 2.75L0 5.5z"/></svg>
<svg style="left:331px;top:319.59999999999997px;" width="13" height="13" viewBox="0 0 24 24"><path fill="#1f1f1f" d="M4 20c-.55 0-1.02-.2-1.41-.59C2.2 19.02 2 18.55 2 18V6c0-.55.2-1.02.59-1.41C2.98 4.2 3.45 4 4 4h6l2 2h8c.55 0 1.02.2 1.41.59.39.39.59.86.59 1.41H11.17l-2-2H4v12l2.4-8h17.1l-2.58 8.6c-.13.43-.38.78-.74 1.03-.36.25-.75.37-1.18.37H4zm2.1-2h12.9l1.8-6H7.9l-1.8 6z"/></svg>
<div class="t" style="left:353.6px;top:322.57px;font-size:8.9px;color:#1f1f1f;font-weight:normal;-webkit-text-stroke:0.00px #1f1f1f">Organisieren</div>
<svg style="left:508.9px;top:323.29999999999995px" width="3.1" height="5.5" viewBox="0 0 3.1 5.5"><path fill="#1f1f1f" d="M0 0L3.1 2.75L0 5.5z"/></svg>
<svg style="left:331px;top:339.7px;" width="13" height="13" viewBox="0 0 24 24"><path fill="#1f1f1f" d="M11 7h2v2h-2zm0 4h2v6h-2zm1-9C6.48 2 2 6.48 2 12s4.48 10 10 10 10-4.48 10-10S17.52 2 12 2zm0 18c-4.41 0-8-3.59-8-8s3.59-8 8-8 8 3.59 8 8-3.59 8-8 8z"/></svg>
<div class="t" style="left:353.6px;top:342.67px;font-size:8.9px;color:#1f1f1f;font-weight:normal;-webkit-text-stroke:0.00px #1f1f1f">Dateiinformationen</div>
<svg style="left:508.9px;top:343.4px" width="3.1" height="5.5" viewBox="0 0 3.1 5.5"><path fill="#1f1f1f" d="M0 0L3.1 2.75L0 5.5z"/></svg>
<svg style="left:331px;top:369.4px;" width="13" height="13" viewBox="0 0 24 24"><path fill="#1f1f1f" d="M7 21c-.55 0-1.02-.2-1.41-.59C5.2 20.02 5 19.55 5 19V6H4V4h5V3h6v1h5v2h-1v13c0 .55-.2 1.02-.59 1.41-.39.39-.86.59-1.41.59H7zM17 6H7v13h10V6zM9 17h2V8H9v9zm4 0h2V8h-2v9z"/></svg>
<div class="t" style="left:353.6px;top:372.37px;font-size:8.9px;color:#1f1f1f;font-weight:normal;-webkit-text-stroke:0.00px #1f1f1f">In Papierkorb verschieben</div>
<div class="t" style="left:469.7px;top:272.91px;font-size:7.2px;color:#444746;font-weight:normal;-webkit-text-stroke:0.08px #444746;">Ctrl+C Ctrl+V</div>
<div class="a" style="left:524px;top:316.4px;width:201px;height:69.9px;border-radius:3px;background:#fff;box-shadow:0 1px 2px rgba(0,0,0,.3),0 1px 3px 1px rgba(0,0,0,.15)"></div>
<div class="a" style="left:524px;top:321.1px;width:201px;height:19.7px;background:#e3e3e3"></div>
<svg style="left:531.2px;top:324.5px;" width="13" height="13" viewBox="0 0 24 24"><path fill="#1f1f1f" d="M14 13H9v-2h5l-1.6-1.6L13.8 8l4 4-4 4-1.4-1.4L14 13zM4 20c-.55 0-1.02-.2-1.41-.59C2.2 19.02 2 18.55 2 18V6c0-.55.2-1.02.59-1.41C2.98 4.2 3.45 4 4 4h6l2 2h8c.55 0 1.02.2 1.41.59.39.39.59.86.59 1.41v10c0 .55-.2 1.02-.59 1.41-.39.39-.86.59-1.41.59H4zm0-2h16V8h-8.83l-2-2H4v12z"/></svg>
<div class="t" style="left:554.4px;top:327.42px;font-size:8.95px;color:#1f1f1f;font-weight:normal;-webkit-text-stroke:0.00px #1f1f1f">Verschieben</div>
<svg style="left:532px;top:345px" width="13" height="12" viewBox="0 0 13 12"><path d="M4.6 1.5H7Q7.6 1.5 7.9 2L10.2 6M7.4 10.7H2.9Q2.4 10.7 2.1 10.2L1.3 8.9Q1 8.4 1.3 7.9L4 2Q4.3 1.5 4.9 1.5M4.1 8.6 5.8 5.6 7.2 7.8" fill="none" stroke="#1f1f1f" stroke-width="1.15" stroke-linejoin="round" stroke-linecap="round"/><path d="M10.5 7.5V11.5M8.5 9.5H12.5" stroke="#1f1f1f" stroke-width="1.2"/></svg>
<div class="t" style="left:554.4px;top:347.62px;font-size:8.95px;color:#1f1f1f;font-weight:normal;-webkit-text-stroke:0.00px #1f1f1f">Verknüpfung hinzufügen</div>
<svg style="left:532.8px;top:365.2px;" width="12.2" height="12.2" viewBox="0 0 24 24"><path fill="#1f1f1f" d="M22 9.24l-7.19-.62L12 2 9.19 8.63 2 9.24l5.46 4.73L5.82 21 12 17.27 18.18 21l-1.63-7.03L22 9.24zM12 15.4l-3.76 2.27 1-4.28-3.32-2.88 4.38-.38L12 6.1l1.71 4.04 4.38.38-3.32 2.88 1 4.28L12 15.4z"/></svg>
<div class="t" style="left:554.4px;top:367.61px;font-size:9.2px;color:#1f1f1f;font-weight:normal;-webkit-text-stroke:0.00px #1f1f1f">Zu „Markiert“ hinzufügen</div>
<svg style="left:0;top:0" width="1200" height="606" viewBox="0 0 1200 606"><path d="M528.4 319.6H534.6M540.4 319.6H546.6M552.4 319.6H558.6M564.4 319.6H570.6M576.4 319.6H582.6M588.4 319.6H594.6M600.4 319.6H606.6M612.4 319.6H618.6M618.4 325.5V331.1M618.4 337.6V342.6H617M605.5 342.6H611.4M593.5 342.6H599.4M581.5 342.6H587.4M569.5 342.6H575.4M557.5 342.6H563.4M545.5 342.6H551.4M533.5 342.6H539.4M524.6 333.4V342.6H527M524.6 321.3V327.5" fill="none" stroke="#e8401c" stroke-width="2.8" stroke-linecap="round" stroke-linejoin="round"/></svg>
</body></html>
